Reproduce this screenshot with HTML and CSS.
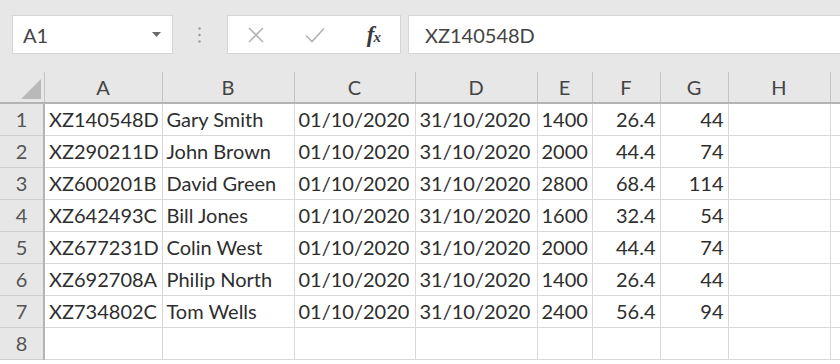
FILE: index.html
```html
<!DOCTYPE html>
<html lang="en">
<head>
    <meta charset="UTF-8">
    <meta name="viewport" content="width=device-width, initial-scale=1.0">
    <title>Sheet</title>
    <link rel="stylesheet" href="styles.css">
</head>
<body>
    <div class="toolbar">
        <div class="name-box">
            <span>A1</span>
            <svg class="arrow" width="9" height="5" viewBox="0 0 9 5"><path d="M0 0h9L4.5 5z" fill="#6a6a6a"/></svg>
        </div>
        <div class="grip">
            <svg width="3" height="16" viewBox="0 0 3 16"><circle cx="1.5" cy="1.5" r="1.2" fill="#9a9a9a"/><circle cx="1.5" cy="8" r="1.2" fill="#9a9a9a"/><circle cx="1.5" cy="14.5" r="1.2" fill="#9a9a9a"/></svg>
        </div>
        <div class="fx-box">
            <svg class="icon" width="16" height="16" viewBox="0 0 16 16"><path d="M1 1L15 15M15 1L1 15" stroke="#b4b4b4" stroke-width="1.6" fill="none"/></svg>
            <svg class="icon" width="20" height="16" viewBox="0 0 20 16"><path d="M1 8.5L7 14.5L19 1.5" stroke="#b4b4b4" stroke-width="1.6" fill="none"/></svg>
            <span class="fx">f<small>x</small></span>
        </div>
        <div class="formula-input">XZ140548D</div>
    </div>

    <table class="sheet">
        <colgroup>
            <col style="width:44px">
            <col style="width:118px">
            <col style="width:132px">
            <col style="width:121px">
            <col style="width:122px">
            <col style="width:55px">
            <col style="width:68px">
            <col style="width:68px">
            <col style="width:102px">
            <col style="width:40px">
        </colgroup>
        <thead>
            <tr>
                <th class="corner"><svg width="20" height="20" viewBox="0 0 20 20"><path d="M20 0V20H0z" fill="#b9b9b9"/></svg></th>
                <th>A</th><th>B</th><th>C</th><th>D</th><th>E</th><th>F</th><th>G</th><th>H</th><th></th>
            </tr>
        </thead>
        <tbody>
            <tr><th>1</th><td>XZ140548D</td><td>Gary Smith</td><td>01/10/2020</td><td>31/10/2020</td><td class="num">1400</td><td class="num">26.4</td><td class="num">44</td><td></td><td></td></tr>
            <tr><th>2</th><td>XZ290211D</td><td>John Brown</td><td>01/10/2020</td><td>31/10/2020</td><td class="num">2000</td><td class="num">44.4</td><td class="num">74</td><td></td><td></td></tr>
            <tr><th>3</th><td>XZ600201B</td><td>David Green</td><td>01/10/2020</td><td>31/10/2020</td><td class="num">2800</td><td class="num">68.4</td><td class="num">114</td><td></td><td></td></tr>
            <tr><th>4</th><td>XZ642493C</td><td>Bill Jones</td><td>01/10/2020</td><td>31/10/2020</td><td class="num">1600</td><td class="num">32.4</td><td class="num">54</td><td></td><td></td></tr>
            <tr><th>5</th><td>XZ677231D</td><td>Colin West</td><td>01/10/2020</td><td>31/10/2020</td><td class="num">2000</td><td class="num">44.4</td><td class="num">74</td><td></td><td></td></tr>
            <tr><th>6</th><td>XZ692708A</td><td>Philip North</td><td>01/10/2020</td><td>31/10/2020</td><td class="num">1400</td><td class="num">26.4</td><td class="num">44</td><td></td><td></td></tr>
            <tr><th>7</th><td>XZ734802C</td><td>Tom Wells</td><td>01/10/2020</td><td>31/10/2020</td><td class="num">2400</td><td class="num">56.4</td><td class="num">94</td><td></td><td></td></tr>
            <tr><th>8</th><td></td><td></td><td></td><td></td><td></td><td></td><td></td><td></td><td></td></tr>
        </tbody>
    </table>
</body>
</html>
```

FILE: styles.css
```css
body {
    margin: 0;
    font-family: Lato, "Open Sans", sans-serif;
    background-color: #fff;
    color: #2e2e2e;
    overflow: hidden;
}
.toolbar {
    display: flex;
    align-items: center;
    height: 72px;
    padding: 0 0 3px 12px;
    box-sizing: border-box;
    background-color: #e7e7e7;
}
.name-box,
.fx-box,
.formula-input {
    height: 39px;
    background-color: #fff;
    border: 1px solid #d6d6d6;
    box-sizing: border-box;
    display: flex;
    align-items: center;
}
.name-box {
    width: 161px;
    padding: 0 11px 0 10px;
    justify-content: space-between;
    font-size: 20px;
    color: #444;
}
.grip {
    width: 52px;
    display: flex;
    justify-content: center;
    padding-right: 2px;
}
.fx-box {
    width: 174px;
    padding: 0 20px 0 20px;
    justify-content: space-between;
}
.fx-box .icon {
    display: block;
}
.fx {
    font-family: "Liberation Serif", serif;
    font-style: italic;
    font-weight: bold;
    font-size: 23px;
    color: #3a3a3a;
    letter-spacing: -1px;
}
.fx small {
    font-size: 15px;
}
.formula-input {
    flex: 1;
    margin-left: 7px;
    padding-left: 16px;
    font-size: 20px;
    color: #444;
    border-right: none;
}
.sheet {
    border-collapse: collapse;
    table-layout: fixed;
    width: 870px;
    font-size: 20px;
}
.sheet th,
.sheet td {
    height: 32px;
    padding: 0 4px;
    border: 1px solid #d8d8d8;
    white-space: nowrap;
    overflow: hidden;
    box-sizing: border-box;
}
.sheet thead th {
    height: 31px;
    background-color: #e7e7e7;
    font-weight: normal;
    color: #444;
    border-top: none;
    border-color: #c4c4c4;
    border-bottom: 2px solid #b4b4b4;
}
.sheet thead th.corner {
    text-align: right;
    vertical-align: bottom;
    padding: 0 3px 3px 0;
    border-left: none;
}
.sheet thead th.corner svg {
    display: block;
    margin-left: auto;
}
.sheet tbody th {
    background-color: #e7e7e7;
    font-weight: normal;
    color: #555;
    border-color: #cdcdcd;
    border-left: none;
    border-right: 2px solid #b4b4b4;
}
.sheet td.num {
    text-align: right;
}
```
